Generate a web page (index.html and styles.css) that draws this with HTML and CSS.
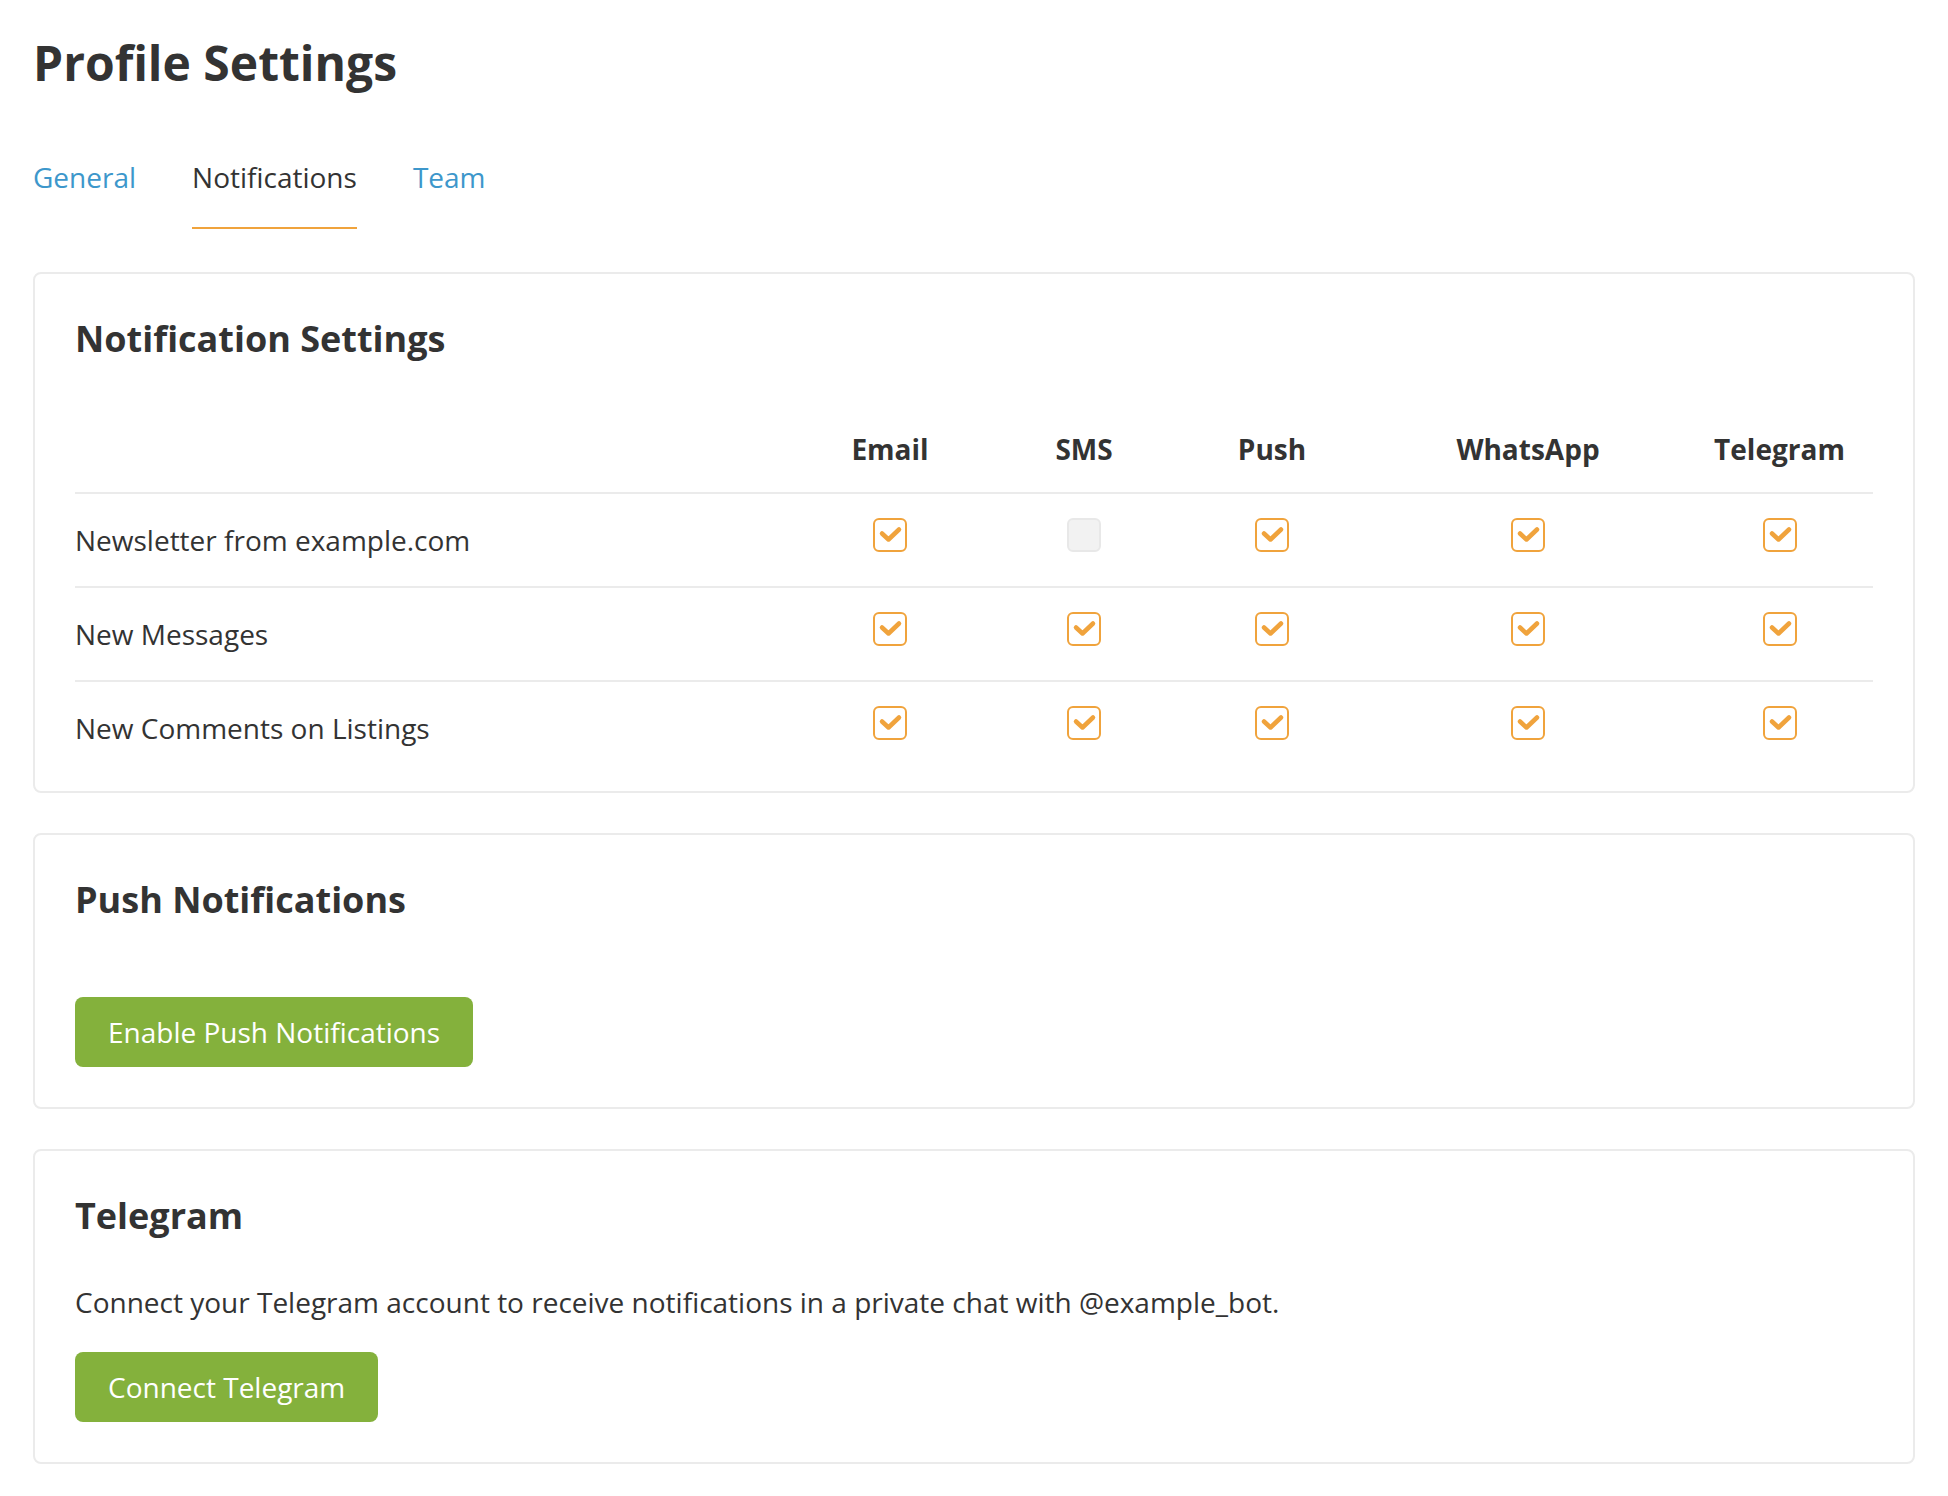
FILE: index.html
```html
<!DOCTYPE html>
<html lang="en">
<head>
    <meta charset="UTF-8" />
    <meta name="viewport" content="width=device-width, initial-scale=1.0"/>
    <title>Profile Settings</title>
    <link rel="stylesheet" href="styles.css">
</head>
<body>
    <div class="page">
        <h1 class="page-title">Profile Settings</h1>

        <nav class="tabs">
            <a href="#" class="tab">General</a>
            <a href="#" class="tab active">Notifications</a>
            <a href="#" class="tab">Team</a>
        </nav>

        <section class="card card-settings">
            <h2 class="card-title">Notification Settings</h2>

            <div class="matrix">
                <div class="matrix-row matrix-head">
                    <div></div>
                    <div class="cell">Email</div>
                    <div class="cell">SMS</div>
                    <div class="cell">Push</div>
                    <div class="cell">WhatsApp</div>
                    <div class="cell">Telegram</div>
                </div>

                <div class="matrix-row">
                    <div class="label">Newsletter from example.com</div>
                    <div class="cell"><span class="check on"><svg viewBox="0 0 30 30"><path d="M7 13.5l6.5 6 10.5-10"/></svg></span></div>
                    <div class="cell"><span class="check"></span></div>
                    <div class="cell"><span class="check on"><svg viewBox="0 0 30 30"><path d="M7 13.5l6.5 6 10.5-10"/></svg></span></div>
                    <div class="cell"><span class="check on"><svg viewBox="0 0 30 30"><path d="M7 13.5l6.5 6 10.5-10"/></svg></span></div>
                    <div class="cell"><span class="check on"><svg viewBox="0 0 30 30"><path d="M7 13.5l6.5 6 10.5-10"/></svg></span></div>
                </div>

                <div class="matrix-row">
                    <div class="label">New Messages</div>
                    <div class="cell"><span class="check on"><svg viewBox="0 0 30 30"><path d="M7 13.5l6.5 6 10.5-10"/></svg></span></div>
                    <div class="cell"><span class="check on"><svg viewBox="0 0 30 30"><path d="M7 13.5l6.5 6 10.5-10"/></svg></span></div>
                    <div class="cell"><span class="check on"><svg viewBox="0 0 30 30"><path d="M7 13.5l6.5 6 10.5-10"/></svg></span></div>
                    <div class="cell"><span class="check on"><svg viewBox="0 0 30 30"><path d="M7 13.5l6.5 6 10.5-10"/></svg></span></div>
                    <div class="cell"><span class="check on"><svg viewBox="0 0 30 30"><path d="M7 13.5l6.5 6 10.5-10"/></svg></span></div>
                </div>

                <div class="matrix-row">
                    <div class="label">New Comments on Listings</div>
                    <div class="cell"><span class="check on"><svg viewBox="0 0 30 30"><path d="M7 13.5l6.5 6 10.5-10"/></svg></span></div>
                    <div class="cell"><span class="check on"><svg viewBox="0 0 30 30"><path d="M7 13.5l6.5 6 10.5-10"/></svg></span></div>
                    <div class="cell"><span class="check on"><svg viewBox="0 0 30 30"><path d="M7 13.5l6.5 6 10.5-10"/></svg></span></div>
                    <div class="cell"><span class="check on"><svg viewBox="0 0 30 30"><path d="M7 13.5l6.5 6 10.5-10"/></svg></span></div>
                    <div class="cell"><span class="check on"><svg viewBox="0 0 30 30"><path d="M7 13.5l6.5 6 10.5-10"/></svg></span></div>
                </div>
            </div>
        </section>

        <section class="card">
            <h2 class="card-title">Push Notifications</h2>
            <div class="push-actions">
                <button class="btn">Enable Push Notifications</button>
            </div>
        </section>

        <section class="card">
            <h2 class="card-title">Telegram</h2>
            <p class="card-text">Connect your Telegram account to receive notifications in a private chat with @example_bot.</p>
            <button class="btn">Connect Telegram</button>
        </section>
    </div>
</body>
</html>
```

FILE: styles.css
```css
body {
    margin: 0;
    background-color: #fff;
    font-family: "Open Sans", "Noto Sans", sans-serif;
    font-size: 28px;
    color: #333;
}

.page {
    padding: 30px 33px 0;
}

.page-title {
    margin: 0;
    font-size: 48px;
    font-weight: bold;
    color: #333;
}

.tabs {
    display: flex;
    gap: 56px;
    margin-top: 63px;
    margin-bottom: 43px;
}

.tab {
    padding-bottom: 31px;
    border-bottom: 2px solid transparent;
    text-decoration: none;
    color: #3d97cb;
}

.tab.active {
    color: #333;
    border-bottom-color: #f0a33c;
}

.card {
    border: 2px solid #ebebeb;
    border-radius: 8px;
    padding: 40px;
    margin-bottom: 40px;
}

.card-settings {
    padding-bottom: 17px;
}

.card-title {
    margin: 0 0 43px;
    font-size: 36px;
    font-weight: bold;
    color: #333;
}

.matrix-row {
    display: grid;
    grid-template-columns: 711px 208px 180px 196px 316px 1fr;
    align-items: center;
    height: 92px;
    border-bottom: 2px solid #ebebeb;
}

.matrix-row:last-child {
    border-bottom: none;
}

.matrix-head {
    height: 86px;
    font-weight: bold;
}

.cell {
    display: flex;
    justify-content: center;
}

.check {
    box-sizing: border-box;
    width: 34px;
    height: 34px;
    margin-bottom: 10px;
    border: 2px solid #e8e8e8;
    border-radius: 6px;
    background-color: #f2f2f2;
}

.check.on {
    border-color: #f0a33c;
    background-color: #fff;
}

.check svg {
    display: block;
    width: 30px;
    height: 30px;
    fill: none;
    stroke: #f0a33c;
    stroke-width: 4.5;
    stroke-linecap: round;
    stroke-linejoin: round;
}

.push-actions {
    padding-top: 30px;
}

.card-text {
    margin: 0 0 31px;
}

.btn {
    border: none;
    border-radius: 8px;
    padding: 16px 33px;
    background-color: #84b13c;
    color: #fff;
    font-family: inherit;
    font-size: 28px;
    line-height: 38px;
    cursor: pointer;
}
```
